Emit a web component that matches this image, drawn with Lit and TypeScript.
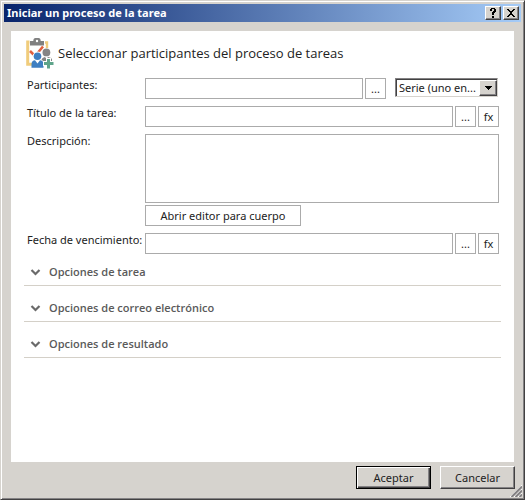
import { LitElement, html, css, svg } from "lit";
import { customElement, property } from "lit/decorators.js";

@customElement("option-section")
class OptionSection extends LitElement {
  @property() label = "";
  @property({ type: Boolean }) open = false;

  static styles = css`
    :host {
      display: block;
      border-bottom: 1px solid #d4d0c8;
    }
    .toggle {
      display: flex;
      align-items: center;
      gap: 8px;
      width: 100%;
      height: 27px;
      padding: 0 0 0 6px;
      border: 0;
      background: none;
      color: #5a5a5a;
      font: 600 11px/16px "Open Sans", "Noto Sans", sans-serif;
      text-align: left;
    }
    .chevron {
      width: 11px;
      height: 8px;
    }
  `;

  render() {
    return html`
      <button
        class="toggle"
        type="button"
        aria-expanded=${this.open ? "true" : "false"}
        @click=${() => (this.open = !this.open)}
      >
        <svg class="chevron" viewBox="0 0 11 8" aria-hidden="true">
          <path d="M1.5 2 5.5 6 9.5 2" fill="none" stroke="#6a6a6a" stroke-width="2.2" />
        </svg>
        <span>${this.label}</span>
      </button>
    `;
  }
}

const taskIcon = svg`
  <path d="M3.500 4H1.700v22.300H6" fill="none" stroke="#f0cc7c" stroke-width="3" />
  <path d="M19 4.500h2V10" fill="none" stroke="#f0cc7c" stroke-width="2.400" />
  <path d="M4 3h3.300c0-1.800.8-3 2.200-3h3c1.400 0 2.200 1.200 2.200 3H18v4.400H4z" fill="#808080" />
  <circle cx="11" cy="3" r="1.200" fill="#fff" />
  <path d="m4 13 3.500 3.500M17 8.500l-5 6" stroke="#e0603f" stroke-width="2.600" fill="none" />
  <circle cx="20.400" cy="14.400" r="3.900" fill="#858585" />
  <path d="M15.500 21.500c1-2 3-2.500 5-2.500s5 .5 5.500 2.500V23H17z" fill="#858585" />
  <path d="m19 19 1.500 2 1.500-2z" fill="#fff" />
  <circle cx="11.500" cy="18.200" r="4.700" fill="#fff" />
  <circle cx="11.500" cy="18.200" r="3.800" fill="#3f7fc1" />
  <path d="M5.500 29.700V26c0-2.500 1.500-3.600 3.500-3.800l2.500 3.300 2.500-3.300c2 .2 3.500 1.300 3.500 3.800v3.700z" fill="#3f7fc1" />
  <path d="M22.500 20v10.500M17 25.500h11" stroke="#fff" stroke-width="5" />
  <path d="M22.500 21v9.500M18 25.500h9.500" stroke="#5fa58b" stroke-width="3" />
`;

@customElement("app-root")
class AppRoot extends LitElement {
  static styles = css`
    :host {
      display: block;
      font: 11px/16px "Noto Sans", "Open Sans", sans-serif;
      color: #222;
    }
    * {
      box-sizing: border-box;
    }
    .window {
      position: relative;
      display: flex;
      flex-direction: column;
      min-height: 100vh;
      padding: 2px;
      background: #d6d3ce;
      border: 1px solid;
      border-color: #d6d3ce #424142 #424142 #d6d3ce;
      box-shadow: inset 1px 1px #fff, inset -1px -1px #848284;
    }
    .titlebar {
      display: flex;
      align-items: center;
      gap: 2px;
      height: 18px;
      margin: 1px;
      padding: 0 2px 0 3px;
      background: linear-gradient(90deg, #08246b, #a5cbf7);
      color: #fff;
    }
    .title {
      flex: 1;
      margin: 0;
      font: bold 11px/18px "Noto Sans", "Open Sans", sans-serif;
    }
    .caption {
      display: grid;
      place-items: center;
      width: 16px;
      height: 14px;
      padding: 0;
    }
    .raised {
      background: #d6d3ce;
      border: 1px solid;
      border-color: #fff #424142 #424142 #fff;
      border-radius: 0;
      box-shadow: inset -1px -1px #848284;
      color: #222;
    }
    .glyph {
      display: block;
    }
    .panel {
      flex: 1;
      margin: 8px 8px 0;
      padding: 6px 13px 16px;
      background: #fff;
    }
    .header {
      display: flex;
      align-items: center;
      gap: 4px;
      height: 32px;
      margin: 0 0 9px 2px;
    }
    .heading {
      margin: 0;
      font: 13px/20px "Open Sans", "Noto Sans", sans-serif;
    }
    .form {
      display: grid;
      grid-template-columns: 118px minmax(0, 1fr);
      row-gap: 7px;
      margin: 0 2px 0 3px;
    }
    .label {
      line-height: 14px;
      white-space: nowrap;
    }
    .row {
      display: flex;
      gap: 2px;
    }
    .stack {
      display: flex;
      flex-direction: column;
      align-items: flex-start;
      gap: 2px;
    }
    .field {
      flex: 1;
      min-width: 0;
      height: 21px;
      padding: 0 3px;
      border: 1px solid #ababab;
      border-radius: 0;
      background: #fff;
      font: inherit;
    }
    .area {
      display: block;
      flex: none;
      width: 100%;
      height: 69px;
      resize: none;
    }
    .flat {
      width: 21px;
      height: 21px;
      padding: 0;
      border: 1px solid #ababab;
      border-radius: 0;
      background: #fff;
      color: #222;
      font: inherit;
    }
    .wide {
      width: 156px;
    }
    .picker {
      position: relative;
      width: 103px;
      height: 19px;
      margin: 0 1px 0 7px;
    }
    .select {
      appearance: none;
      display: block;
      width: 100%;
      height: 100%;
      padding: 0 18px 0 3px;
      border: 1px solid;
      border-color: #848284 #d6d3ce #d6d3ce #848284;
      border-radius: 0;
      box-shadow: inset 1px 1px #424142;
      background: #fff;
      color: #222;
      font: inherit;
    }
    .arrow {
      position: absolute;
      top: 2px;
      right: 1px;
      bottom: 1px;
      width: 18px;
      display: grid;
      place-items: center;
      pointer-events: none;
    }
    .sections {
      display: grid;
      gap: 8px;
      margin-top: 4px;
    }
    .footer {
      display: flex;
      justify-content: flex-end;
      gap: 9px;
      padding: 4px 7px 8px;
    }
    .action {
      width: 75px;
      height: 23px;
      padding: 0;
      font: inherit;
    }
    .primary {
      border-color: #000;
      box-shadow: inset 1px 1px #fff, inset -1px -1px #424142, inset -2px -2px #848284;
    }
    .grip {
      position: absolute;
      right: 2px;
      bottom: 2px;
    }
  `;

  render() {
    return html`
      <div class="window" role="dialog" aria-labelledby="title">
        <div class="titlebar">
          <h1 class="title" id="title">Iniciar un proceso de la tarea</h1>
          <button class="caption raised" type="button" aria-label="Ayuda">
            <svg class="glyph" width="8" height="10" viewBox="0 0 8 10" aria-hidden="true">
              <path
                d="M1 1h1V0h4v1h1v3H6v1H5v2H3V4h1V3h1V1H3v2H1zM3 8h2v2H3z"
                fill="#000"
                shape-rendering="crispEdges"
              />
            </svg>
          </button>
          <button class="caption raised" type="button" aria-label="Cerrar">
            <svg class="glyph" width="8" height="8" viewBox="0 0 8 8" aria-hidden="true">
              <path
                d="M0 0h2v1h1v1h2V1h1V0h2v1H7v1H6v1H5v2h1v1h1v1h1v1H6V7H5V6H3v1H2v1H0V7h1V6h1V5h1V3H2V2H1V1H0z"
                fill="#000"
                shape-rendering="crispEdges"
              />
            </svg>
          </button>
        </div>

        <div class="panel">
          <div class="header">
            <svg width="28" height="31" viewBox="0 0 28 31" aria-hidden="true">${taskIcon}</svg>
            <h2 class="heading">Seleccionar participantes del proceso de tareas</h2>
          </div>

          <div class="form">
            <label class="label" for="participants">Participantes:</label>
            <div class="row">
              <input class="field" id="participants" type="text" />
              <button class="flat" type="button">...</button>
              <div class="picker">
                <select class="select" aria-label="Orden">
                  <option>Serie (uno en...</option>
                </select>
                <span class="arrow raised">
                  <svg class="glyph" width="7" height="4" viewBox="0 0 7 4" aria-hidden="true">
                    <path d="M0 0h7v1H6v1H5v1H4v1H3V3H2V2H1V1H0z" fill="#000" />
                  </svg>
                </span>
              </div>
            </div>

            <label class="label" for="task-title">Título de la tarea:</label>
            <div class="row">
              <input class="field" id="task-title" type="text" />
              <button class="flat" type="button">...</button>
              <button class="flat" type="button">fx</button>
            </div>

            <label class="label" for="description">Descripción:</label>
            <div class="stack">
              <textarea class="field area" id="description"></textarea>
              <button class="flat wide" type="button">Abrir editor para cuerpo</button>
            </div>

            <label class="label" for="due">Fecha de vencimiento:</label>
            <div class="row">
              <input class="field" id="due" type="text" />
              <button class="flat" type="button">...</button>
              <button class="flat" type="button">fx</button>
            </div>
          </div>

          <div class="sections">
            <option-section label="Opciones de tarea"></option-section>
            <option-section label="Opciones de correo electrónico"></option-section>
            <option-section label="Opciones de resultado"></option-section>
          </div>
        </div>

        <div class="footer">
          <button class="action raised primary" type="button">Aceptar</button>
          <button class="action raised" type="button">Cancelar</button>
        </div>
        <svg class="grip" width="12" height="12" viewBox="0 0 12 12" aria-hidden="true">
          <path d="M0 12 12 0M4 12 12 4M8 12 12 8" stroke="#fff" />
          <path d="M1.500 12 12 1.500M5.500 12 12 5.500M9.500 12 12 9.500" stroke="#848284" stroke-width="2" />
        </svg>
      </div>
    `;
  }
}
